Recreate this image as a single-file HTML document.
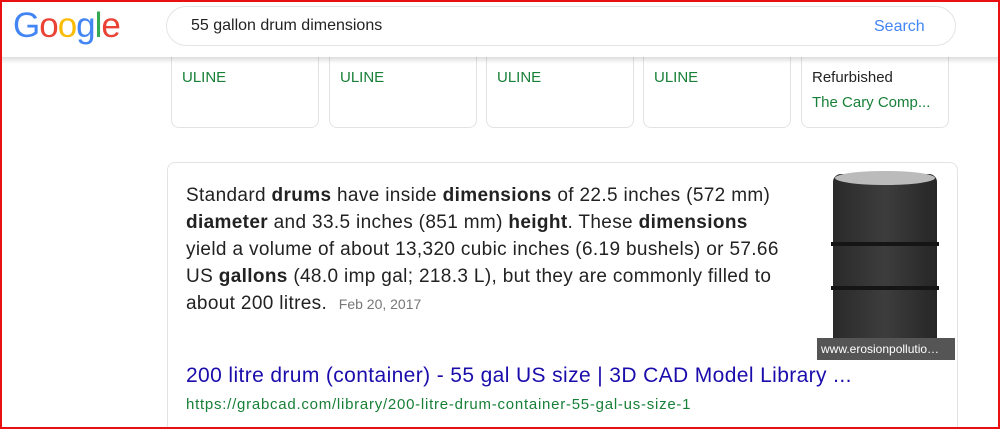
<!DOCTYPE html>
<html><head><style>
html,body{margin:0;padding:0;width:1000px;height:429px;overflow:hidden;}
body{position:relative;background:#fff;font-family:"Liberation Sans",Arial,sans-serif;}
.frame{position:absolute;left:0;top:0;width:996px;height:425px;border:2px solid #e81010;z-index:10;pointer-events:none;}
.header{position:absolute;left:0;top:0;width:1000px;height:57px;background:#fff;box-shadow:0 3px 5px rgba(0,0,0,.15);z-index:5;}
.logo{position:absolute;left:13px;top:6px;font-size:35px;letter-spacing:-1px;font-family:"Liberation Sans",sans-serif;}
.sb{position:absolute;left:166px;top:6px;width:788px;height:38px;border:1px solid #e4e4e4;border-radius:20px;background:#fff;}
.q{position:absolute;left:191px;top:17px;font-size:16px;color:#222;}
.sbtn{position:absolute;left:874px;top:18px;font-size:16px;color:#4285f4;}
.card{position:absolute;top:30px;height:96px;border:1px solid #e3e3e3;border-radius:8px;background:#fff;}
.card .t{position:absolute;left:10px;font-size:15px;}
.g{color:#188038;}
.ans{position:absolute;left:167px;top:162px;width:789px;height:264px;border:1px solid #e3e3e3;border-bottom:none;border-radius:8px 8px 0 0;}
.txt{position:absolute;left:186px;top:182px;width:640px;font-size:19px;letter-spacing:0.35px;line-height:27px;color:#222;white-space:nowrap;}
.date{font-size:14px;letter-spacing:0;color:#777;margin-left:6px;}
.img{position:absolute;left:817px;top:168px;width:138px;height:192px;background:#fff;}
.cap{position:absolute;left:817px;top:338px;width:138px;height:22px;background:#555;color:#fff;font-size:12px;line-height:22px;text-indent:4px;white-space:nowrap;overflow:hidden;}
.lnk{position:absolute;left:186px;top:364px;font-size:21px;letter-spacing:0.38px;color:#1a0dab;white-space:nowrap;}
.url{position:absolute;left:186px;top:396px;font-size:15px;letter-spacing:0.75px;color:#188038;white-space:nowrap;}
</style></head><body>
<div class="card" style="left:171px;width:146px"><div class="t g" style="top:38px">ULINE</div></div>
<div class="card" style="left:329px;width:146px"><div class="t g" style="top:38px">ULINE</div></div>
<div class="card" style="left:486px;width:146px"><div class="t g" style="top:38px">ULINE</div></div>
<div class="card" style="left:643px;width:146px"><div class="t g" style="top:38px">ULINE</div></div>
<div class="card" style="left:801px;width:146px"><div class="t" style="top:38px;color:#222">Refurbished</div><div class="t g" style="top:63px;white-space:nowrap">The Cary Comp...</div></div>
<div class="header">
<div class="logo"><span style="color:#4285f4">G</span><span style="color:#ea4335">o</span><span style="color:#fbbc05">o</span><span style="color:#4285f4">g</span><span style="color:#34a853">l</span><span style="color:#ea4335">e</span></div>
<div class="sb"></div>
<div class="q">55 gallon drum dimensions</div>
<div class="sbtn">Search</div>
</div>
<div class="ans"></div>
<div class="txt">Standard <b>drums</b> have inside <b>dimensions</b> of 22.5 inches (572 mm)<br><b>diameter</b> and 33.5 inches (851 mm) <b>height</b>. These <b>dimensions</b><br>yield a volume of about 13,320 cubic inches (6.19 bushels) or 57.66<br>US <b>gallons</b> (48.0 imp gal; 218.3 L), but they are commonly filled to<br>about 200 litres. <span class="date">Feb 20, 2017</span></div>
<div class="img"><svg width="138" height="192" viewBox="0 0 138 192">
<defs><linearGradient id="d" x1="0" x2="1"><stop offset="0" stop-color="#2a2a2a"/><stop offset=".5" stop-color="#3d3d3d"/><stop offset="1" stop-color="#262626"/></linearGradient></defs>
<rect x="16" y="6" width="104" height="172" rx="8" fill="url(#d)"/>
<ellipse cx="68" cy="10" rx="50" ry="7" fill="#bbb"/>
<rect x="14" y="74" width="108" height="4" fill="#151515"/>
<rect x="14" y="118" width="108" height="4" fill="#151515"/>
</svg></div>
<div class="cap">www.erosionpollutio…</div>
<div class="lnk">200 litre drum (container) - 55 gal US size | 3D CAD Model Library ...</div>
<div class="url">https://grabcad.com/library/200-litre-drum-container-55-gal-us-size-1</div>
<div class="frame"></div>
</body></html>
